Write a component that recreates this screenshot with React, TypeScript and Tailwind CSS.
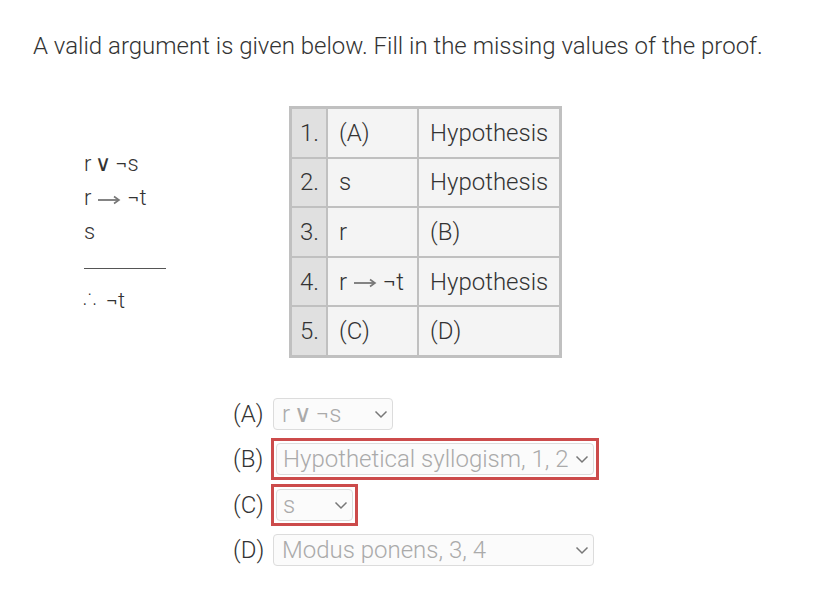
import React from "react";

const font = { fontFamily: "Roboto, 'Noto Sans', 'DejaVu Sans', sans-serif" };

function Chevron() {
  return (
    <svg width="16" height="16" viewBox="0 0 16 16" className="shrink-0">
      <path d="M2.5 5.5 L8 11 L13.5 5.5" fill="none" stroke="#777" strokeWidth="1.5" />
    </svg>
  );
}

function Arrow() {
  return (
    <svg width="24" height="12" viewBox="0 0 24 12" className="mx-[6px] inline-block align-middle">
      <path d="M1 6 H21" stroke="#777" strokeWidth="1.8" />
      <path d="M17 2.5 L22 6 L17 9.5" fill="none" stroke="#777" strokeWidth="1.6" />
    </svg>
  );
}

function Or() {
  return (
    <span className="mx-[4px] font-light" style={{ fontFamily: "'Noto Sans', 'DejaVu Sans', sans-serif" }}>
      ∨
    </span>
  );
}

function Select({ value, width, flagged }: { value: React.ReactNode; width: string; flagged?: boolean }) {
  const box = (
    <div
      className={`flex h-[32px] items-center justify-between rounded-[4px] border border-[#dcdcdc] bg-[#fbfbfb] pr-[3px] text-[24px] text-[#aaaaaa] ${width} ${flagged ? "pl-[6px]" : "pl-[8px]"}`}
    >
      <span className="whitespace-nowrap">{value}</span>
      <Chevron />
    </div>
  );
  if (!flagged) return <div className="ml-[2px] py-[4px]">{box}</div>;
  return <div className="border-[3px] border-[#cc4b4b] p-[2px]">{box}</div>;
}

const rows: [string, React.ReactNode, string][] = [
  ["1.", "(A)", "Hypothesis"],
  ["2.", "s", "Hypothesis"],
  ["3.", "r", "(B)"],
  ["4.", <span>r<Arrow />¬t</span>, "Hypothesis"],
  ["5.", "(C)", "(D)"],
];

export default function App() {
  return (
    <div className="min-h-[604px] w-[820px] bg-white font-light text-[#333]" style={font}>
      <h1 className="pl-[33px] pt-[30px] text-[24px] font-light leading-[32px]">
        A valid argument is given below. Fill in the missing values of the proof.
      </h1>

      <div className="mt-[44px] flex items-center">
        <div className="ml-[84px] w-[82px] text-[22px] leading-[34px]">
          <div>
            r<Or />¬s
          </div>
          <div>
            r<Arrow />¬t
          </div>
          <div>s</div>
          <div className="mt-[19px] border-t border-[#555]" />
          <div className="mt-[12px]">
            <span style={{ fontFamily: "'Noto Sans', 'DejaVu Sans', sans-serif" }} className="text-[26px]">∴</span> ¬t
          </div>
        </div>

        <div className="ml-[123px] grid grid-cols-[34px_89px_140px] gap-[2px] bg-[#c0c0c0] p-[3px] text-[24px]">
          {rows.map((r) => (
            <React.Fragment key={r[0]}>
              <div className="flex h-[47.6px] items-center bg-[#e0e0e0] pl-[8px]">{r[0]}</div>
              <div className="flex items-center whitespace-nowrap bg-[#f4f4f4] pl-[11px]">{r[1]}</div>
              <div className="flex items-center bg-[#f4f4f4] pl-[11px]">{r[2]}</div>
            </React.Fragment>
          ))}
        </div>
      </div>

      <div className="mt-[36px] ml-[233px] flex flex-col gap-[4px] text-[24px]">
        <div className="flex items-center">
          <span className="w-[38px]">(A)</span>
          <Select value={<>r<Or />¬s</>} width="w-[120px]" />
        </div>
        <div className="flex items-center">
          <span className="w-[38px]">(B)</span>
          <Select value="Hypothetical syllogism, 1, 2" width="w-[318px]" flagged />
        </div>
        <div className="flex items-center">
          <span className="w-[38px]">(C)</span>
          <Select value="s" width="w-[77px]" flagged />
        </div>
        <div className="flex items-center">
          <span className="w-[38px]">(D)</span>
          <Select value="Modus ponens, 3, 4" width="w-[321px]" />
        </div>
      </div>
    </div>
  );
}
